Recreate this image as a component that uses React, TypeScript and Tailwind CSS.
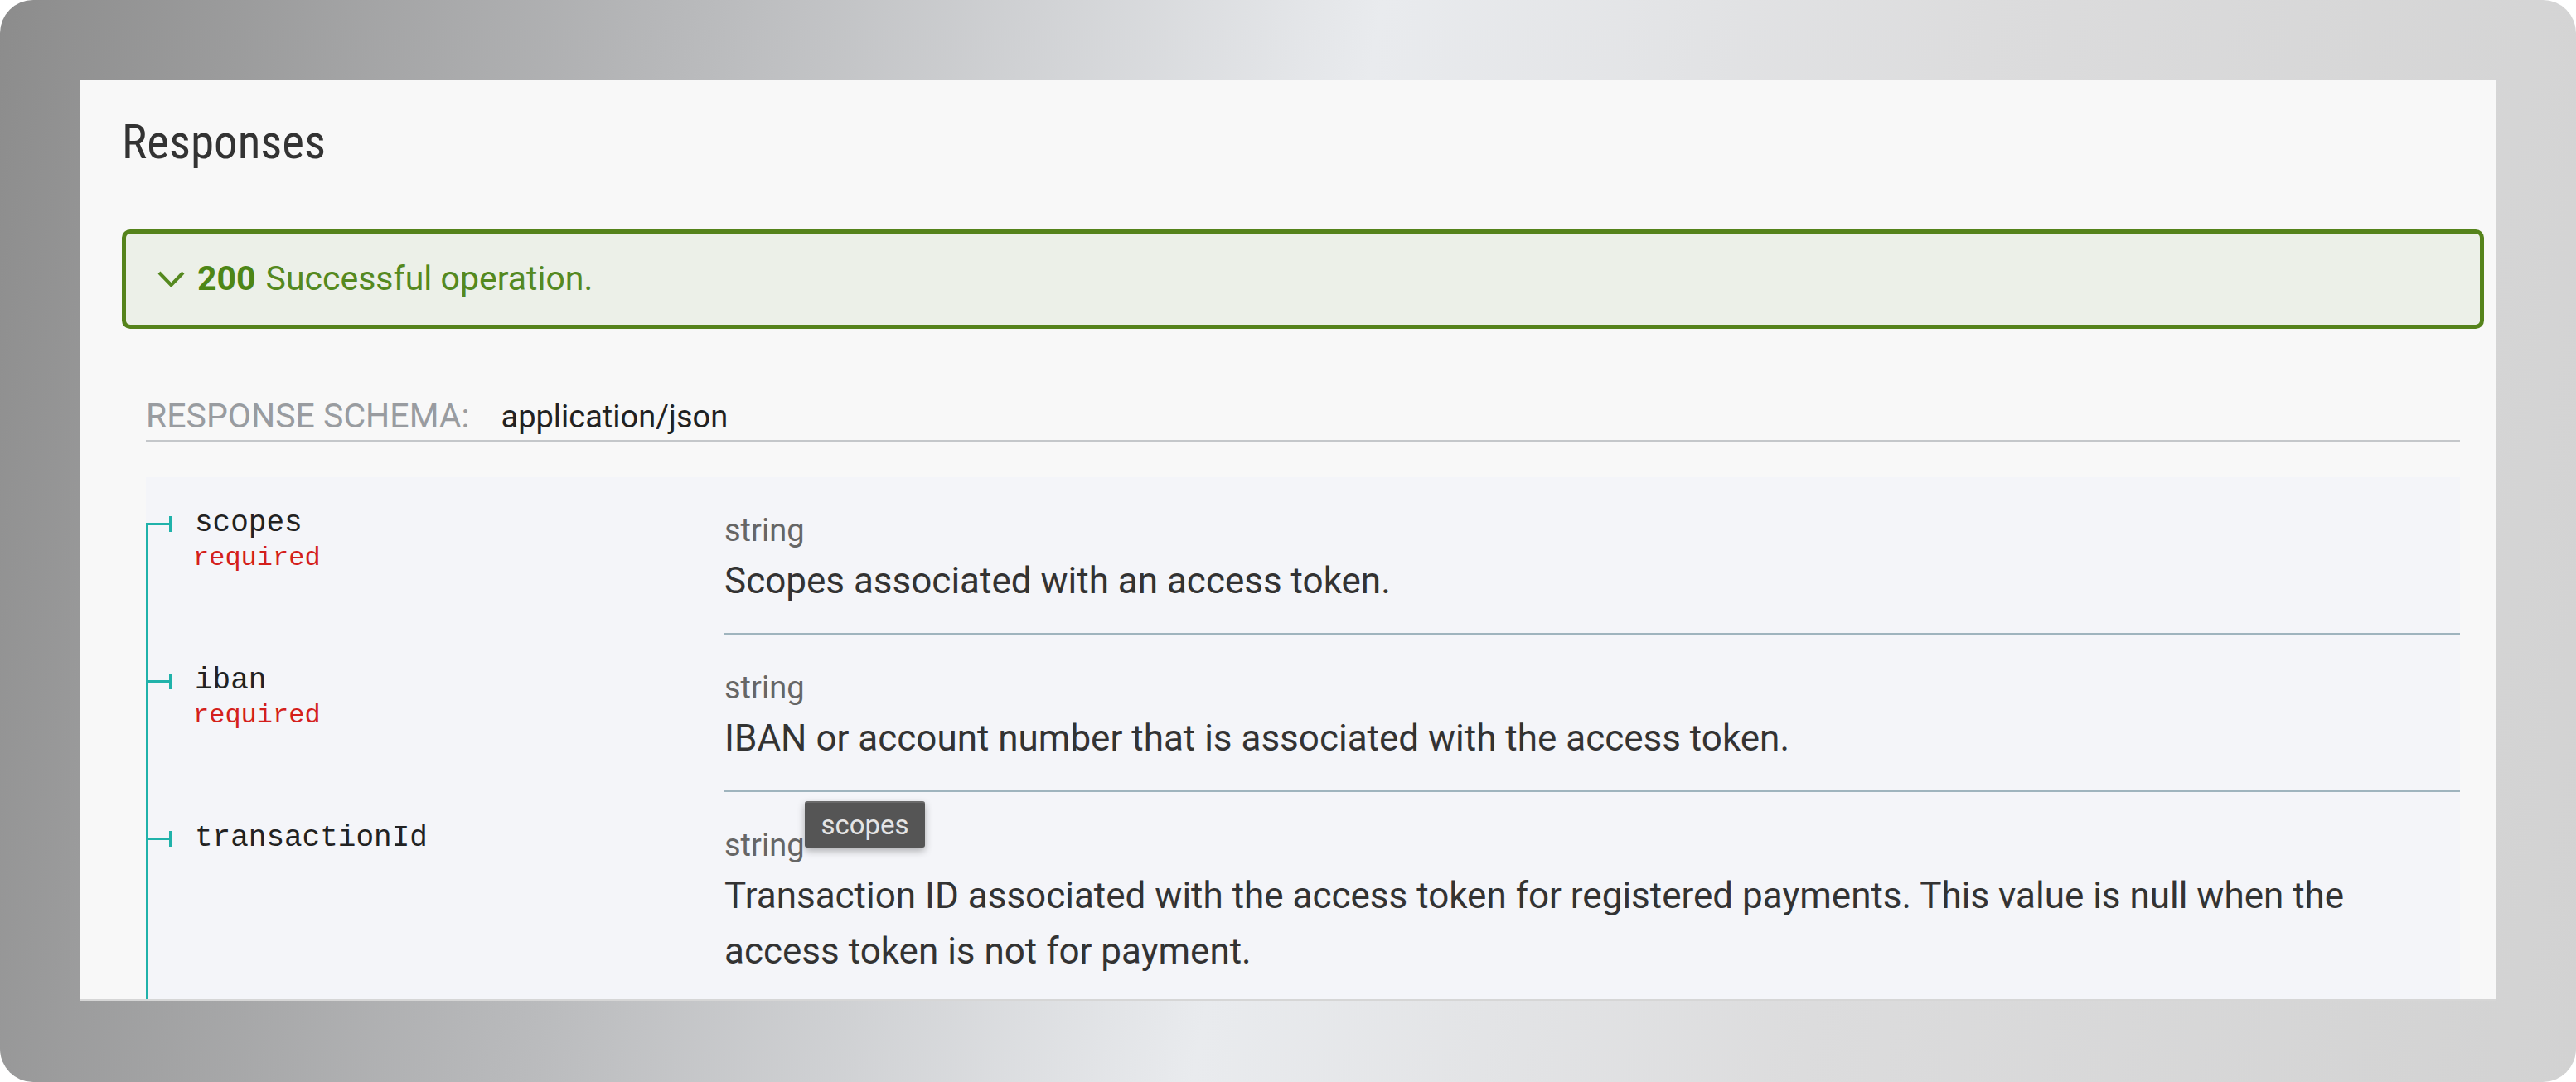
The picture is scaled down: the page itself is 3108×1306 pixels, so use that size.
import React from 'react';

type Field = {
  name: string;
  required: boolean;
  type: string;
  description: string;
  tooltip?: string;
};

const fields: Field[] = [
  {
    name: 'scopes',
    required: true,
    type: 'string',
    description: 'Scopes associated with an access token.',
  },
  {
    name: 'iban',
    required: true,
    type: 'string',
    description: 'IBAN or account number that is associated with the access token.',
  },
  {
    name: 'transactionId',
    required: false,
    type: 'string',
    description:
      'Transaction ID associated with the access token for registered payments. This value is null when the access token is not for payment.',
    tooltip: 'scopes',
  },
];

function FieldRow({ field, first }: { field: Field; first: boolean }) {
  return (
    <div className="flex">
      {/* name cell with tree lines */}
      <div className="relative w-[698px] shrink-0">
        <span
          className={
            first
              ? 'absolute left-0 top-[55px] bottom-0 w-[3px] bg-[#20b2aa]'
              : 'absolute left-0 top-0 bottom-0 w-[3px] bg-[#20b2aa]'
          }
        />
        <span className="absolute left-0 top-[55px] h-[3px] w-[31px] bg-[#20b2aa]" />
        <span className="absolute left-[28px] top-[47px] h-[19px] w-[3px] bg-[#20b2aa]" />
        <div className="pl-[59px] pt-[36px] font-['Liberation_Mono',monospace]">
          <div className="text-[36px] leading-[40px] text-[#222]">{field.name}</div>
          {field.required && (
            <div className="mt-[2px] -ml-[2px] text-[32px] leading-[40px] text-[#d41f1c]">required</div>
          )}
        </div>
      </div>

      {/* details cell */}
      <div className="relative flex-1 border-b-2 border-[#9fb4be] pt-[40px] pb-[29px]">
        <div className="text-[38px] leading-[48px] text-[#666]">{field.type}</div>
        <div className="mt-[4px] pr-[40px] text-[44px] leading-[67px] text-[#333]">
          {field.description}
        </div>
        {field.tooltip && (
          <div className="absolute left-[97px] top-[11px] flex h-[56px] w-[145px] items-center justify-center rounded-[3px] border-t-2 border-[#6a6a6a] bg-[#555] text-[33px] text-[#e4e4e4] shadow-[0_4px_10px_rgba(0,0,0,0.3)]">
            {field.tooltip}
          </div>
        )}
      </div>
    </div>
  );
}

export default function App() {
  return (
    <div className="h-[1306px] w-[3108px] bg-white">
      <div className="h-[1306px] w-[3108px] rounded-[40px] bg-[linear-gradient(100deg,#8c8c8c_0%,#b8b9bb_25%,#e9ebee_50%,#dcdcdd_72%,#d2d2d2_100%)] px-[96px] pt-[96px] font-['Roboto',sans-serif]">
        <div className="h-[1112px] overflow-hidden border-b-2 border-[#d6d6d6] bg-[#f8f8f8] pl-[51px] pr-[15px] pt-[42px]">
          <h3 className="text-[57px] font-normal leading-[68px] text-[#333] font-stretch-[80%]">
            Responses
          </h3>

          {/* status accordion */}
          <div className="mt-[71px] flex h-[120px] items-center rounded-[10px] border-[5px] border-[#55831b] bg-[#ecf0e8] pl-[38px] text-[41px] text-[#55891f]">
            <svg width="33" height="20" viewBox="0 0 33 20" fill="none" className="mr-[15px]">
              <path d="M2 2 L16.5 17 L31 2" stroke="#55891f" strokeWidth="4" />
            </svg>
            <strong className="font-bold text-[#4d8616]">200</strong>
            <span className="ml-[12px]">Successful operation.</span>
          </div>

          {/* schema */}
          <div className="px-[29px]">
            <div className="mt-[81px] flex items-baseline border-b-2 border-[#c4c7ca] pb-[4px]">
              <span className="text-[41px] leading-[48px] text-[#999ca0]">RESPONSE SCHEMA:</span>
              <span className="ml-[38px] text-[38px] leading-[48px] text-[#222]">application/json</span>
            </div>

            <div className="mt-[43px] h-[700px] bg-[#f4f5f9]">
              {fields.map((f, i) => (
                <FieldRow key={f.name} field={f} first={i === 0} />
              ))}
            </div>
          </div>
        </div>
      </div>
    </div>
  );
}
